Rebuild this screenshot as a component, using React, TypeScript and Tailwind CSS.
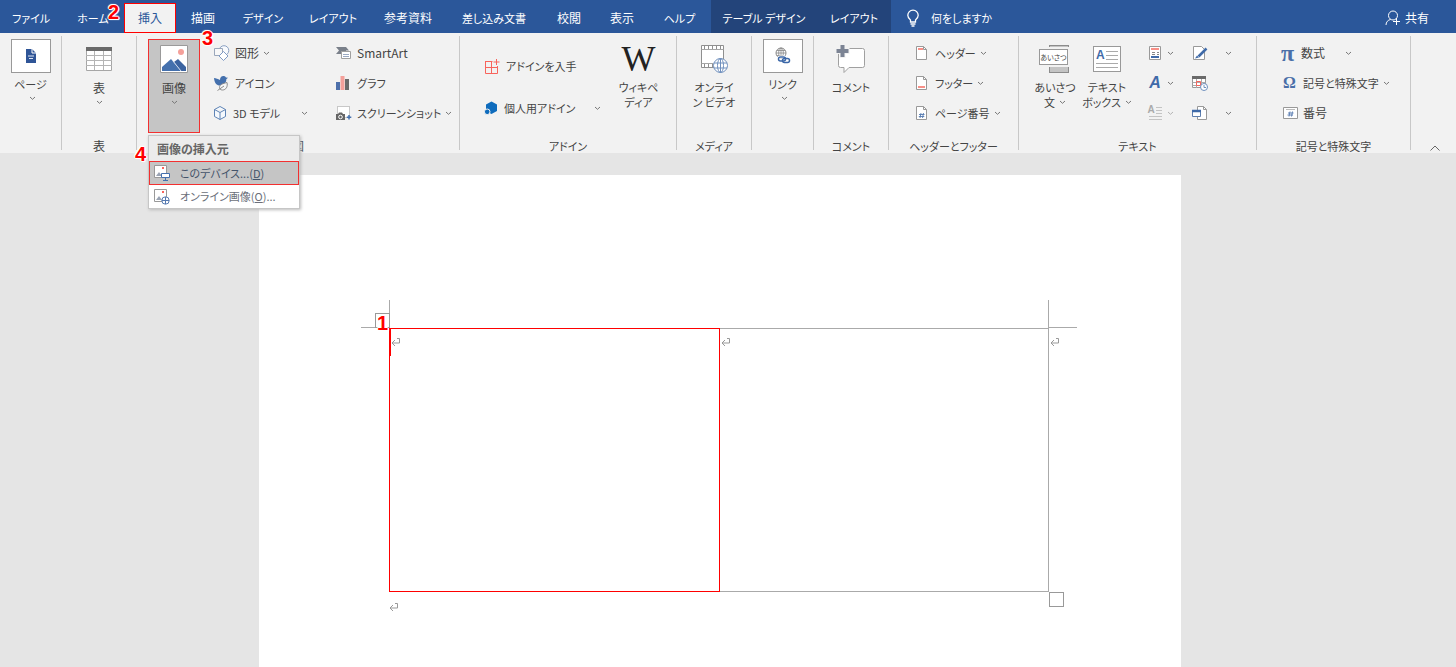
import type { ReactNode } from "react";

type IconProps = { children: ReactNode; w?: number; h?: number };

function Icon({ children, w = 16, h = 16 }: IconProps) {
    return (
        <svg
            width={w}
            height={h}
            viewBox={`0 0 ${w} ${h}`}
            fill="none"
            className="shrink-0"
            aria-hidden="true"
        >
            {children}
        </svg>
    );
}

function Chevron({ className = "" }: { className?: string }) {
    return (
        <svg
            width="7"
            height="5"
            viewBox="0 0 7 5"
            fill="none"
            stroke="#777"
            className={`shrink-0 ${className}`}
            aria-hidden="true"
        >
            <path d="M1 1l2.5 2.3L6 1" />
        </svg>
    );
}

function Callout({ n, className }: { n: number; className: string }) {
    return (
        <span
            className={`absolute z-20 font-['Liberation_Sans',sans-serif] text-xl leading-5 font-bold text-[#f00] [text-shadow:1px_0_#fff,-1px_0_#fff,0_1px_#fff,0_-1px_#fff,1px_1px_1px_#fff,-1px_-1px_1px_#fff] ${className}`}
        >
            {n}
        </span>
    );
}

const labelSize = (text = "") => (/[ぁ-んァ-ヶ]/.test(text) ? "text-[11px]" : "text-xs");

/* ---------- icons ---------- */

const PageIcon = () => (
    <Icon w={12} h={16}>
        <path d="M1 1h6l4 4v10H1z" fill="#2f5597" />
        <path d="M7 1v4h4" stroke="#fff" />
        <path d="M3 8h6M4 10.5h4" stroke="#dfe7f4" strokeWidth="1.2" />
    </Icon>
);

const TableIcon = () => (
    <Icon w={28} h={26}>
        <path d="M1.5 3.5h25v21h-25z" fill="#fff" stroke="#a6a6a6" />
        <path d="M1 1h26v4H1z" fill="#6a6a6a" />
        <path d="M1 9.5h26M1 14.5h26M1 19.5h26M9.5 5v19M18.5 5v19" stroke="#b4b4b4" />
    </Icon>
);

const PictureIcon = () => (
    <Icon w={28} h={30}>
        <path d="M.5 1.5h27v27H.5z" fill="#fff" stroke="#9a9a9a" />
        <circle cx="21" cy="8" r="3" fill="#f4a09a" />
        <path d="M2 27v-4l9-8 10 12z" fill="#4470ad" />
        <path d="M14 18l4-3 8 8v4h-5z" fill="#3b63a0" />
        <path d="M13 17l8 10" stroke="#dfe7f4" strokeWidth=".8" />
    </Icon>
);

const ShapesIcon = () => (
    <Icon w={18}>
        <circle cx="11" cy="5.5" r="4.8" fill="#f8fafd" stroke="#8aa0c2" />
        <path d="M1.500 3.500h8v7h-8z" fill="#f8f8f8" stroke="#9aa7bb" />
        <path d="M10.500 6.500l4.500 4.500-4.500 4.500L6 11z" fill="#fff" stroke="#7f9ac4" />
    </Icon>
);

const BirdIcon = () => (
    <Icon w={16}>
        <path
            d="M1 3c2 0 4 1 6 2 0-3 2-4.500 4-4 1 .2 1.500.8 2 1.500l2 .3-1.700 1.500C13.500 8 10 11 6 10.500 3.500 10 1.500 8 1 3z"
            fill="#4470ad"
        />
        <path
            d="M14 7.500c1 4-1 7.500-4.500 7.500-2 0-3-1-3-2.500C6.500 9.500 10 8.500 14 7.500z"
            fill="#f6f6f6"
            stroke="#8a8a8a"
        />
        <path d="M4.500 15.500L11 11" stroke="#8a8a8a" />
    </Icon>
);

const CubeIcon = () => (
    <Icon w={14}>
        <path
            d="M7 1.500l5.500 3v7L7 14.500l-5.500-3v-7zM1.500 4.500L7 7.500l5.500-3M7 7.500v7"
            fill="#f5f9fd"
            stroke="#5f84b6"
        />
    </Icon>
);

const SmartArtIcon = () => (
    <Icon w={17}>
        <path d="M1 2h10l3 3.500h-3V9H1l3-3.500z" fill="#7a808a" />
        <path d="M6.500 6.500h9v7h-9z" fill="#fff" stroke="#a0a0a0" />
        <path d="M8 9.500h6M8 11.500h6" stroke="#9aa9c2" />
    </Icon>
);

const ChartIcon = () => (
    <Icon w={15}>
        <path d="M1 7h4v8H1z" fill="#4d70ab" />
        <path d="M5.500 1h4v14h-4z" fill="#f4a09a" />
        <path d="M10 4h4v11h-4z" fill="#6a6a6a" />
    </Icon>
);

const ScreenshotIcon = () => (
    <Icon w={17}>
        <path d="M2.500 1.500h12v11h-12z" fill="#fff" stroke="#999" strokeDasharray="1 1" />
        <path d="M1 9h2l1-1.500h3L8 9h2v6H1z" fill="#666" />
        <circle cx="5.500" cy="12" r="1.800" fill="#666" stroke="#fff" />
        <path d="M14 10v4.500M11.800 12.200h4.500" stroke="#4470ad" strokeWidth="1.500" />
    </Icon>
);

const StoreIcon = () => (
    <Icon>
        <path d="M1.500 3.500h7M1.500 3v12.500h12V8M1 9.500h12.500M7.500 3.500v12" stroke="#f8645c" />
        <path d="M12.500 1v6M9.500 4h6" stroke="#f8645c" />
    </Icon>
);

const MyAddinIcon = () => (
    <Icon w={14}>
        <path d="M7.500 1.500l5.500 3v6.500l-5.500 3L2 11V4.500z" fill="#0f6cbd" />
        <circle cx="3.200" cy="11.800" r="2.800" fill="#0f6cbd" stroke="#f2f2f2" />
    </Icon>
);

const VideoIcon = () => (
    <Icon w={30} h={30}>
        <path d="M2.500 1.500h22v22h-22z" fill="#fff" stroke="#8f8f8f" />
        <path d="M2.500 5.500h22M2.500 19.500h12" stroke="#a5a5a5" />
        <path d="M5 3.500h18M5 21.500h9" stroke="#8f8f8f" strokeWidth="3" strokeDasharray="1 3" />
        <circle cx="21.500" cy="21.500" r="7" fill="#fff" stroke="#6f8fbd" />
        <ellipse cx="21.500" cy="21.500" rx="3" ry="7" stroke="#6f8fbd" />
        <path d="M15 19h13M15 24h13M21.500 14.500v14" stroke="#6f8fbd" />
    </Icon>
);

const LinkIcon = () => (
    <Icon w={18} h={18}>
        <circle cx="7" cy="6" r="5" fill="#fff" stroke="#888" />
        <path d="M2 6h10M3 3.500h8M3 8.500h6M7 1v10" stroke="#888" strokeWidth=".8" />
        <ellipse cx="7" cy="6" rx="2.300" ry="5" stroke="#888" strokeWidth=".8" />
        <rect x="4.500" y="10" width="7" height="4" rx="2" stroke="#fff" strokeWidth="3" />
        <rect x="4.500" y="10" width="7" height="4" rx="2" stroke="#3c68a8" strokeWidth="1.500" />
        <rect x="8.500" y="11.500" width="7" height="4" rx="2" stroke="#3c68a8" strokeWidth="1.500" />
    </Icon>
);

const CommentIcon = () => (
    <Icon w={32} h={32}>
        <path
            d="M5.500 5.500h22q2 0 2 2v15q0 2-2 2H14l-5 5v-5H5.500q-2 0-2-2v-15q0-2 2-2z"
            fill="#fff"
            stroke="#a0a0a0"
        />
        <path d="M7.500 0v15M.5 8h14" stroke="#f2f2f2" strokeWidth="6" />
        <path d="M7.500 2v12M1.500 8h12" stroke="#7c8494" strokeWidth="4" />
    </Icon>
);

type DocKind = "header" | "footer" | "number";

const DocIcon = ({ kind }: { kind: DocKind }) => (
    <Icon w={13}>
        <path d="M1.500 1.500h7l3 3v10h-10z" fill="#fff" stroke="#999" />
        <path d="M8.500 1.500v3h3" stroke="#999" />
        {kind === "header" && <path d="M3 4h5" stroke="#f89088" strokeWidth="2" />}
        {kind === "footer" && <path d="M3 12h7" stroke="#f89088" strokeWidth="2" />}
        {kind === "number" && (
            <path d="M6 8l-1 5M8.500 8l-1 5M4 9.500h5.500M3.800 11.500h5.500" stroke="#5579b0" strokeWidth=".9" />
        )}
    </Icon>
);

const GreetingIcon = () => (
    <span className="relative block h-8 w-8 before:absolute before:top-[2px] before:right-[2px] before:h-7 before:w-5 before:border before:border-[#8c8c8c] before:bg-[#c4c4c4]">
        <span className="absolute top-[6px] left-0 flex h-4 w-[29px] items-center justify-center border border-[#999] bg-white text-[7px] whitespace-nowrap outline-2 outline-[#f2f2f2]">
            あいさつ
        </span>
    </span>
);

const TextBoxIcon = () => (
    <span className="relative block h-[26px] w-7 border border-[#999] bg-white">
        <span className="absolute top-[2px] left-[2px] font-['Liberation_Sans',sans-serif] text-xs leading-3 font-bold text-[#3f6aa8]">
            A
        </span>
        <svg width="26" height="24" viewBox="0 0 26 24" stroke="#aaa" aria-hidden="true">
            <path d="M12 4.500h12M12 8.500h12M12 12.500h12M2 16.500h22M2 20.500h22" />
        </svg>
    </span>
);

const QuickPartsIcon = () => (
    <Icon w={14}>
        <path d="M1.500 1.500h11v13h-11z" fill="#fff" stroke="#999" />
        <path d="M3 4h8" stroke="#f89088" strokeWidth="2" />
        <path d="M4 7.500h3M4 9.500h3M9 7.500h2M9 9.500h2" stroke="#888" />
        <path d="M3 12h8" stroke="#3f6aa8" strokeWidth="2" />
    </Icon>
);

const DropCapIcon = () => (
    <span className="relative block h-4 w-[15px]">
        <span className="absolute top-0 left-0 font-['Liberation_Sans',sans-serif] text-[10px] leading-[10px] font-bold text-[#aaa]">
            A
        </span>
        <svg width="15" height="16" viewBox="0 0 15 16" stroke="#c4c4c4" aria-hidden="true">
            <path d="M8 2.500h6M8 5.500h6M8 8.500h6M1 11.500h13M1 14.500h13" />
        </svg>
    </span>
);

const SignatureIcon = () => (
    <Icon>
        <path d="M1.500 1.500h8l3 3v10h-11z" fill="#fff" stroke="#999" />
        <path d="M14.500 3.500l-8 8" stroke="#3f6aa8" strokeWidth="2.500" />
        <path d="M3 13.500l2-3 2 2z" fill="#3f6aa8" />
    </Icon>
);

const DateIcon = () => (
    <Icon>
        <path d="M.5 2.500h13v10H.5z" fill="#fff" stroke="#999" />
        <path d="M0 1h14v3H0z" fill="#6a6a6a" />
        <path d="M.5 7.500h13M.5 10.500h13M4.500 4v9M9.500 4v9" stroke="#aaa" />
        <path d="M4.500 6.500h4v4h-4z" stroke="#f8645c" />
        <circle cx="12" cy="12" r="3.500" fill="#fff" stroke="#6f8fbd" />
        <path d="M12 10v2.500h2" stroke="#6f8fbd" />
    </Icon>
);

const ObjectIcon = () => (
    <Icon>
        <path d="M5.500 1.500h6l3 3v10h-9z" fill="#fff" stroke="#999" />
        <path d="M11.500 1.500v3h3" stroke="#999" />
        <path d="M.5 5.500h8v6h-8z" fill="#fff" stroke="#5f7fae" />
        <path d="M0 6h9" stroke="#3f6aa8" strokeWidth="2.500" />
    </Icon>
);

const NumberIcon = () => (
    <Icon w={15}>
        <path d="M.5 2.500h14v11H.5z" fill="#fff" stroke="#999" />
        <path d="M3 4.500h9" stroke="#bbb" />
        <path d="M7 6.500l-1 5M9.500 6.500l-1 5M5 8h5.500M4.500 10H10" stroke="#5579b0" strokeWidth=".9" />
    </Icon>
);

const MenuPictureIcon = ({ online = false }: { online?: boolean }) => (
    <Icon>
        <path d="M.5 .5h12v12H.5z" fill="#fff" stroke="#999" />
        <path d="M8 2h2v2H8z" fill="#f8645c" />
        <path d="M2 11l3-4 3 4z" fill="#9aa3b3" />
        {online ? (
            <>
                <circle cx="11.500" cy="11.500" r="3.700" fill="#fff" stroke="#5579b0" />
                <path d="M8 11.500h7M11.500 8v7" stroke="#5579b0" />
            </>
        ) : (
            <>
                <path d="M7.500 8.500h8v4h-8z" fill="#fff" stroke="#4470ad" />
                <path d="M11.500 13v2M9 15.500h5" stroke="#4470ad" />
            </>
        )}
    </Icon>
);

const ReturnMark = () => (
    <Icon w={10} h={10}>
        <path d="M6 1.500h2.500v4.500H1M4 3L1 6l3 3" stroke="#999" />
    </Icon>
);

/* ---------- ribbon parts ---------- */

const tabs = [
    { label: "ファイル", width: "w-[62px]" },
    { label: "ホーム", width: "w-[62px]" },
    { label: "挿入", width: "w-[52px]", active: true },
    { label: "描画", width: "w-[54px]" },
    { label: "デザイン", width: "w-[66px]" },
    { label: "レイアウト", width: "w-[74px]" },
    { label: "参考資料", width: "w-[76px]" },
    { label: "差し込み文書", width: "w-[96px]" },
    { label: "校閲", width: "w-[54px]" },
    { label: "表示", width: "w-[52px]" },
    { label: "ヘルプ", width: "w-[63px]" },
    { label: "テーブル デザイン", width: "w-[106px]", context: true },
    { label: "レイアウト", width: "w-[74px]", context: true },
];

type GroupProps = { label?: string; width: string; children: ReactNode };

function Group({ label, width, children }: GroupProps) {
    return (
        <div className={`flex shrink-0 ${width}`}>
            <div className="flex min-w-0 flex-1 flex-col pt-[5px]">
                <div className="flex flex-1 items-start">{children}</div>
                <div className={`h-[15px] text-center leading-4 ${labelSize(label)}`}>{label}</div>
            </div>
            <div className="my-[3px] w-px bg-[#c8c8c8]" />
        </div>
    );
}

type BigButtonProps = { icon: ReactNode; lines: string[]; chevron?: boolean; className?: string };

function BigButton({ icon, lines, chevron, className = "w-full" }: BigButtonProps) {
    return (
        <button
            className={`flex flex-col items-center pt-[5px] leading-[15px] ${labelSize(lines[0])} ${className}`}
        >
            <span className="mb-[5px] flex h-8 items-center">{icon}</span>
            {lines.map((line, i) => (
                <span key={line} className="flex items-center gap-1 whitespace-nowrap">
                    {line}
                    {chevron && i > 0 && i === lines.length - 1 && <Chevron />}
                </span>
            ))}
            {chevron && lines.length === 1 && <Chevron className="mt-[5px]" />}
        </button>
    );
}

function BoxButton({ icon, label }: { icon: ReactNode; label: string }) {
    return (
        <button className="flex w-full flex-col items-center pt-px text-[11px] leading-4">
            <span className="mb-[3px] flex h-[34px] w-10 items-center justify-center border border-[#999] bg-white">
                {icon}
            </span>
            {label}
            <Chevron className="mt-1 ml-1" />
        </button>
    );
}

type SmallButtonProps = {
    icon: ReactNode;
    label: string;
    slot?: string;
    chevron?: string;
};

function SmallButton({ icon, label, slot = "w-[22px]", chevron }: SmallButtonProps) {
    return (
        <button className={`flex h-[30px] items-center whitespace-nowrap ${labelSize(label)}`}>
            <span className={`flex shrink-0 ${slot}`}>{icon}</span>
            {label}
            {chevron && <Chevron className={chevron} />}
        </button>
    );
}

function IconButton({ icon, label, chevron }: { icon: ReactNode; label: string; chevron?: string }) {
    return (
        <button aria-label={label} className="flex h-[30px] items-center">
            <span className="flex w-4 shrink-0 justify-center">{icon}</span>
            {chevron && <Chevron className={chevron} />}
        </button>
    );
}

function PictureMenu() {
    return (
        <div
            role="menu"
            className="absolute top-[95px] -left-px z-10 w-[152px] border border-[#c6c6c6] bg-white text-[11px] shadow-[1px_1px_3px_#bbb]"
        >
            <div className="h-[25px] bg-[#ececec] pl-2 text-xs leading-[25px] font-bold text-[#666]">
                画像の挿入元
            </div>
            <button
                role="menuitem"
                className="flex h-6 w-full items-center gap-[10px] border border-[#f23030] bg-[#c5c5c5] pl-1 text-[#44546a]"
            >
                <MenuPictureIcon />
                <span>
                    このデバイス...(<u>D</u>)
                </span>
            </button>
            <button
                role="menuitem"
                className="flex h-[23px] w-full items-center gap-[10px] pl-[5px] text-[#6b6f7a]"
            >
                <MenuPictureIcon online />
                <span>
                    オンライン画像(<u>O</u>)...
                </span>
            </button>
            <Callout n={4} className="top-2 -left-[14px]" />
        </div>
    );
}

function TabBar() {
    return (
        <header className="flex h-[33px] items-stretch bg-[#2b579a] text-white">
            <nav className="flex">
                {tabs.map((tab, i) => (
                    <button
                        key={i}
                        className={`relative shrink-0 whitespace-nowrap ${tab.width} ${labelSize(tab.label)} ${
                            tab.active
                                ? "mt-[3px] border border-[#f00] bg-[#f2f2f2] text-[#2b579a]"
                                : "pt-[3px]"
                        } ${tab.context ? "bg-[#23447a]" : ""}`}
                    >
                        {tab.label}
                        {tab.active && <Callout n={2} className="-top-[2px] -left-[17px]" />}
                    </button>
                ))}
            </nav>
            <button className="flex items-center gap-[10px] pt-[3px] pl-[14px] text-[11px] whitespace-nowrap">
                <Icon w={16} h={18}>
                    <path
                        d="M5.500 13v-2C3.500 9.500 2.800 8 2.800 6.300a5.200 5.200 0 0110.400 0c0 1.700-.7 3.200-2.700 4.700v2zM5.500 15h5M6.500 17h3"
                        stroke="#fff"
                        strokeWidth="1.300"
                    />
                </Icon>
                何をしますか
            </button>
            <button className="mr-[27px] ml-auto flex items-center gap-1 pt-[3px] whitespace-nowrap">
                <Icon w={16}>
                    <circle cx="8" cy="5.500" r="4.500" stroke="#fff" />
                    <path d="M1 15c0-3 2-5 4.500-5.500M11.500 8v7M8 11.500h7" stroke="#fff" />
                </Icon>
                共有
            </button>
        </header>
    );
}

function Ribbon() {
    return (
        <div className="flex h-[120px] bg-[#f2f2f2] text-[#444]">
            <Group width="w-[62px]">
                <BoxButton icon={<PageIcon />} label="ページ" />
            </Group>
            <Group label="表" width="w-[75px]">
                <BigButton icon={<TableIcon />} lines={["表"]} chevron />
            </Group>
            <Group label="図" width="w-[323px]">
                <div className="relative mt-px ml-[11px] h-[94px] w-[52px] border border-[#f23030] bg-[#c5c5c5]">
                    <BigButton
                        icon={<PictureIcon />}
                        lines={["画像"]}
                        chevron
                        className="-mt-[2px] w-full"
                    />
                    <Callout n={3} className="-top-[12px] left-[53px]" />
                    <PictureMenu />
                </div>
                <div className="flex w-[135px] flex-col pl-[13px]">
                    <SmallButton icon={<ShapesIcon />} label="図形" chevron="ml-1" />
                    <SmallButton icon={<BirdIcon />} label="アイコン" />
                    <SmallButton
                        icon={<CubeIcon />}
                        label="3D モデル"
                        slot="w-5"
                        chevron="ml-auto mr-[27px]"
                    />
                </div>
                <div className="flex flex-col">
                    <SmallButton icon={<SmartArtIcon />} label="SmartArt" />
                    <SmallButton icon={<ChartIcon />} label="グラフ" />
                    <SmallButton icon={<ScreenshotIcon />} label="スクリーンショット" chevron="ml-1" />
                </div>
            </Group>
            <Group label="アドイン" width="w-[217px]">
                <div className="mt-[13px] ml-6 flex w-[117px] flex-col gap-3">
                    <SmallButton icon={<StoreIcon />} label="アドインを入手" />
                    <SmallButton
                        icon={<MyAddinIcon />}
                        label="個人用アドイン"
                        slot="w-5"
                        chevron="ml-auto"
                    />
                </div>
                <BigButton
                    icon={
                        <span className="font-['Liberation_Serif',serif] text-4xl leading-8 text-[#222]">
                            W
                        </span>
                    }
                    lines={["ウィキペ", "ディア"]}
                    className="flex-1"
                />
            </Group>
            <Group label="メディア" width="w-[75px]">
                <BigButton icon={<VideoIcon />} lines={["オンライ", "ン ビデオ"]} />
            </Group>
            <Group width="w-[62px]">
                <BoxButton icon={<LinkIcon />} label="リンク" />
            </Group>
            <Group label="コメント" width="w-[75px]">
                <BigButton icon={<CommentIcon />} lines={["コメント"]} />
            </Group>
            <Group label="ヘッダーとフッター" width="w-[130px]">
                <div className="flex flex-col pl-[26px]">
                    <SmallButton icon={<DocIcon kind="header" />} label="ヘッダー" slot="w-5" chevron="ml-1" />
                    <SmallButton icon={<DocIcon kind="footer" />} label="フッター" slot="w-5" chevron="ml-1" />
                    <SmallButton icon={<DocIcon kind="number" />} label="ページ番号" slot="w-5" chevron="ml-1" />
                </div>
            </Group>
            <Group label="テキスト" width="w-[238px]">
                <BigButton
                    icon={<GreetingIcon />}
                    lines={["あいさつ", "文"]}
                    chevron
                    className="ml-[10px] w-[52px]"
                />
                <BigButton
                    icon={<TextBoxIcon />}
                    lines={["テキスト", "ボックス"]}
                    chevron
                    className="w-[52px]"
                />
                <div className="ml-[14px] flex w-[45px] flex-col">
                    <IconButton icon={<QuickPartsIcon />} label="クイック パーツ" chevron="ml-1" />
                    <IconButton
                        icon={
                            <span className="font-['Liberation_Sans',sans-serif] text-base leading-4 font-bold text-[#3f6aa8] italic">
                                A
                            </span>
                        }
                        label="ワードアート"
                        chevron="ml-1"
                    />
                    <IconButton icon={<DropCapIcon />} label="ドロップ キャップ" chevron="ml-1 opacity-50" />
                </div>
                <div className="flex flex-col">
                    <IconButton icon={<SignatureIcon />} label="署名欄" chevron="ml-[17px]" />
                    <IconButton icon={<DateIcon />} label="日付と時刻" />
                    <IconButton icon={<ObjectIcon />} label="オブジェクト" chevron="ml-[17px]" />
                </div>
            </Group>
            <Group label="記号と特殊文字" width="w-[154px]">
                <div className="flex flex-col pl-6">
                    <SmallButton
                        icon={
                            <span className="font-['Liberation_Serif',serif] text-2xl leading-5 font-bold text-[#4a6fa8]">
                                π
                            </span>
                        }
                        label="数式"
                        slot="w-5"
                        chevron="ml-5"
                    />
                    <SmallButton
                        icon={
                            <span className="pl-[2px] font-['Liberation_Serif',serif] text-base leading-5 font-bold text-[#4a6fa8]">
                                Ω
                            </span>
                        }
                        label="記号と特殊文字"
                        chevron="ml-1"
                    />
                    <SmallButton
                        icon={
                            <span className="pl-[2px]">
                                <NumberIcon />
                            </span>
                        }
                        label="番号"
                    />
                </div>
            </Group>
            <button aria-label="リボンを折りたたむ" className="mt-auto mr-4 mb-px ml-auto">
                <Icon w={10} h={8}>
                    <path d="M.5 6.500L5 2l4.500 4.500" stroke="#666" />
                </Icon>
            </button>
        </div>
    );
}

function Document() {
    return (
        <main className="flex flex-1 pt-[22px] pr-[275px] pl-[259px]">
            <div className="flex-1 bg-white pt-[153px] pr-[132px] pl-[130px]">
                <div className="relative">
                    <table className="h-[264px] w-full table-fixed border-collapse">
                        <tbody>
                            <tr>
                                <td className="border border-[#f00] pt-2 pl-px align-top">
                                    <ReturnMark />
                                </td>
                                <td className="border border-[#aaa] border-l-[#f00] pt-2 pl-px align-top">
                                    <ReturnMark />
                                </td>
                            </tr>
                        </tbody>
                    </table>
                    {/* crop marks around the text area */}
                    <div className="absolute -top-7 left-0 h-7 w-px bg-[#aaa]" />
                    <div className="absolute -top-px -left-7 h-px w-7 bg-[#aaa]" />
                    <div className="absolute -top-7 right-0 h-7 w-px bg-[#aaa]" />
                    <div className="absolute -top-px -right-7 h-px w-7 bg-[#aaa]" />
                    {/* move and resize handles */}
                    <div className="absolute -top-[15px] -left-[14px] size-[15px] border border-[#999]" />
                    <div className="absolute -right-[15px] -bottom-[15px] size-[15px] border border-[#999] bg-white" />
                    <div className="absolute top-0 left-px h-7 w-px bg-[#f00]" />
                    <div className="absolute top-[9px] -right-[11px]">
                        <ReturnMark />
                    </div>
                    <Callout n={1} className="-top-[15px] -left-[12px]" />
                </div>
                <div className="pt-[10px]">
                    <ReturnMark />
                </div>
            </div>
        </main>
    );
}

export default function App() {
    return (
        <div className="flex min-h-screen flex-col bg-[#e5e5e5] font-['Noto_Sans_CJK_JP',sans-serif] text-xs [font-feature-settings:'palt']">
            <TabBar />
            <Ribbon />
            <Document />
        </div>
    );
}
